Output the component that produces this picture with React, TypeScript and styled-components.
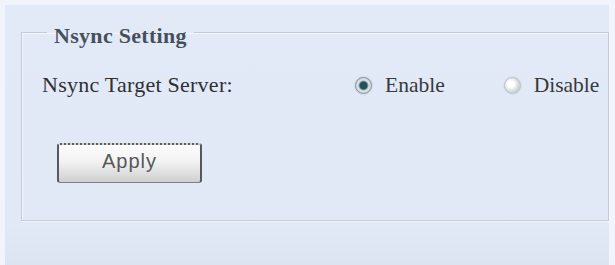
import React from "react";
import styled, { createGlobalStyle } from "styled-components";

const serif = `"Liberation Serif", "Times New Roman", serif`;

const Global = createGlobalStyle`
  html, body { margin: 0; padding: 0; }
  body {
    background: #f1f4fa;
    width: 615px;
    height: 265px;
    overflow: hidden;
    font-family: ${serif};
  }
`;

const Panel = styled.div`
  box-sizing: border-box;
  margin: 5px 6px 0 5px;
  height: 260px;
  background: linear-gradient(#e3eaf7, #e1e8f6 85%, #dde4f1);
  padding: 12px 0 0 16px;
  display: flex;
  flex-direction: column;
`;

const Fieldset = styled.fieldset`
  box-sizing: border-box;
  margin: 0;
  height: 204px;
  padding: 22px 0 0 20px;
  border: 1px solid #c3cbd8;
  box-shadow: inset 1px 1px 0 #f4f7fc, 1px 1px 0 #f4f7fc;
  display: flex;
  flex-direction: column;
  font-family: ${serif};
`;

const Legend = styled.legend`
  margin-left: 5px;
  padding: 7px 7px 0 7px;
  font-family: ${serif};
  font-size: 22px;
  font-weight: bold;
  letter-spacing: 0.3px;
  color: #46505c;
  line-height: 24px;
`;

const Row = styled.div`
  display: flex;
  align-items: center;
  height: 30px;
`;

const Label = styled.span`
  width: 313px;
  font-family: ${serif};
  font-size: 22px;
  letter-spacing: 0.25px;
  color: #2e3034;
`;

const Option = styled.label<{ $gap: number }>`
  display: flex;
  align-items: center;
  margin-right: ${(p) => p.$gap}px;
  font-family: ${serif};
  font-size: 21.5px;
  color: #36393d;
`;

const Radio = styled.span<{ $on: boolean }>`
  box-sizing: border-box;
  width: 17px;
  height: 17px;
  border-radius: 50%;
  margin-right: 13px;
  border: 1px solid ${(p) => (p.$on ? "#8797a0" : "#bcc1c7")};
  box-shadow: 0 0 2px ${(p) => (p.$on ? "#9fb0b8" : "#c9ced4")};
  background: ${(p) =>
    p.$on
      ? "radial-gradient(circle, #2a5059 0 3.5px, #8fa6ae 4.5px, #dfe7ea 5.5px, #c2ccd1 8px)"
      : "radial-gradient(circle at 40% 40%, #ffffff 0 3px, #eef0f2 5px, #d0d4d8 8px)"};
`;

const Actions = styled.div`
  display: flex;
  margin-top: 43px;
  padding-left: 15px;
`;

const Button = styled.button`
  box-sizing: border-box;
  width: 145px;
  height: 40px;
  padding: 0 0 4px;
  border: 1px solid #7d8186;
  border-left: 2px solid #55595e;
  border-right: 2px solid #55595e;
  border-top: 2px dotted #5d6166;
  border-radius: 3px;
  background: linear-gradient(#fdfdfd, #f2f2f2 45%, #dcdcdc 80%, #cfcfcf);
  font-family: "Liberation Sans", Arial, sans-serif;
  font-size: 20px;
  letter-spacing: 1px;
  color: #55585c;
`;

export default function App() {
  return (
    <>
      <Global />
      <Panel>
        <Fieldset>
          <Legend>Nsync Setting</Legend>
          <Row>
            <Label>Nsync Target Server:</Label>
            <Option $gap={59}>
              <Radio $on={true} />
              Enable
            </Option>
            <Option $gap={0}>
              <Radio $on={false} />
              Disable
            </Option>
          </Row>
          <Actions>
            <Button>Apply</Button>
          </Actions>
        </Fieldset>
      </Panel>
    </>
  );
}
